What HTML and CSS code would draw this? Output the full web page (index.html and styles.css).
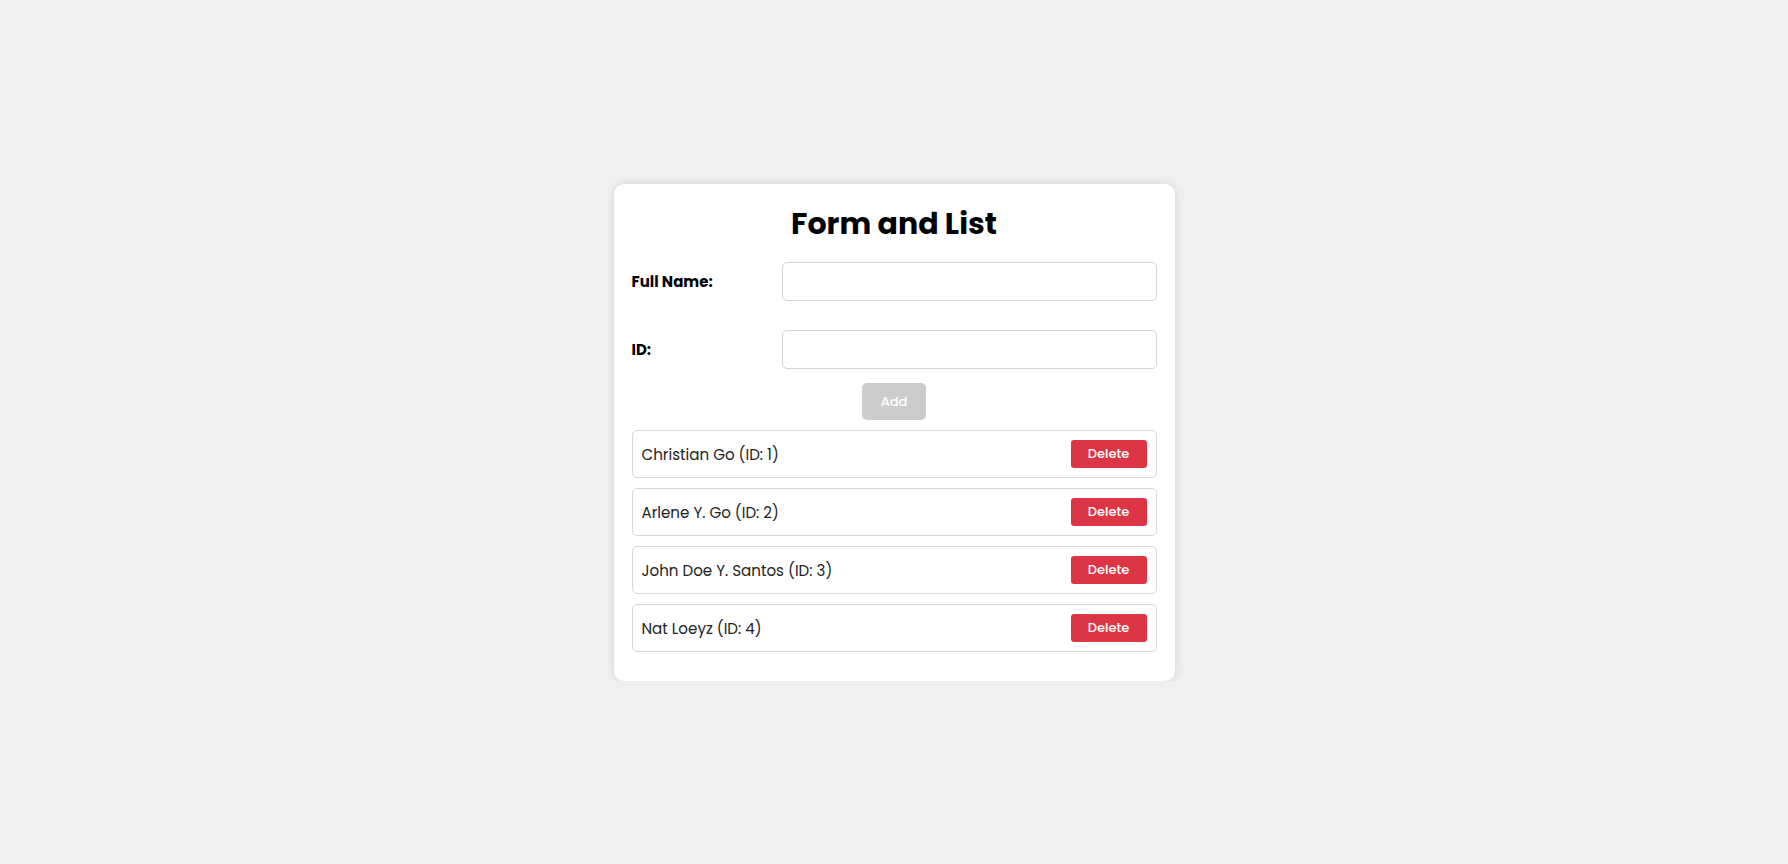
FILE: index.html
```html
<!DOCTYPE html>
<html lang="en">
<head>
<meta charset="utf-8">
<title>Form and List</title>
<link rel="stylesheet" href="styles.css">
</head>
<body>
<main class="page">
  <section class="card">
    <h1 class="title">Form and List</h1>
    <form class="form">
      <div class="row">
        <label class="label" for="fullname">Full Name:</label>
        <input class="input" id="fullname" type="text">
      </div>
      <div class="row">
        <label class="label" for="idnum">ID:</label>
        <input class="input" id="idnum" type="text">
      </div>
      <div class="actions">
        <button class="add" type="button" disabled>Add</button>
      </div>
    </form>
    <ul class="list">
      <li class="item"><span class="item-text">Christian Go (ID: 1)</span><button class="delete" type="button">Delete</button></li>
      <li class="item"><span class="item-text">Arlene Y. Go (ID: 2)</span><button class="delete" type="button">Delete</button></li>
      <li class="item"><span class="item-text">John Doe Y. Santos (ID: 3)</span><button class="delete" type="button">Delete</button></li>
      <li class="item"><span class="item-text">Nat Loeyz (ID: 4)</span><button class="delete" type="button">Delete</button></li>
    </ul>
  </section>
</main>
</body>
</html>
```
FILE: styles.css
```css
* { box-sizing: border-box; }
html, body { margin: 0; padding: 0; }
body {
  background: #f0f0f0;
  font-family: "Poppins", "Open Sans", "Noto Sans", sans-serif;
  color: #000;
}
.page {
  display: flex;
  justify-content: center;
  padding-top: 184px;
}
.card {
  width: 561px;
  background: #fff;
  border-radius: 10px;
  box-shadow: 0 0 10px rgba(0, 0, 0, 0.12);
  padding: 20px 18px 29px;
}
.title {
  margin: 0;
  text-align: center;
  font-size: 30px;
  line-height: 40px;
  font-weight: 700;
}
.form {
  margin-top: 18px;
  display: flex;
  flex-direction: column;
  gap: 29px;
}
.row {
  display: flex;
  align-items: center;
}
.label {
  width: 150px;
  font-weight: 700;
  font-size: 15px;
}
.input {
  flex: 1;
  height: 39px;
  border: 1px solid #d4d4d4;
  border-radius: 5px;
  background: #fff;
}
.actions {
  display: flex;
  justify-content: center;
  margin-top: -15px;
}
.add {
  width: 64px;
  height: 37px;
  border: none;
  border-radius: 5px;
  background: #cccccc;
  color: #fff;
  font-family: inherit;
  font-size: 13px;
  font-weight: 500;
}
.list {
  list-style: none;
  margin: 10px 0 0;
  padding: 0;
  display: flex;
  flex-direction: column;
  gap: 10px;
}
.item {
  display: flex;
  align-items: center;
  justify-content: space-between;
  height: 48px;
  padding: 0 9px 0 9px;
  border: 1px solid #d6d6d6;
  border-radius: 5px;
}
.item-text {
  font-size: 15.1px;
  color: #222;
}
.delete {
  width: 76px;
  height: 28px;
  border: none;
  border-radius: 3px;
  background: #dc3545;
  color: #fff;
  font-family: inherit;
  font-size: 13px;
  font-weight: 500;
}
```
